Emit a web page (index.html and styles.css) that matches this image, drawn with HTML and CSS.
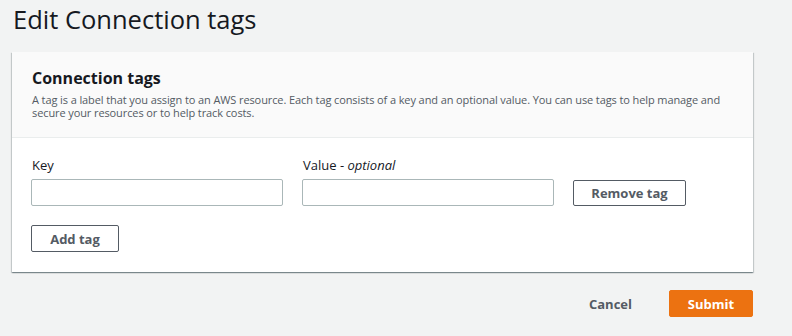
FILE: index.html
```html
<!DOCTYPE html>
<html lang="en">
  <head>
    <meta charset="UTF-8" />
    <meta name="viewport" content="width=device-width, initial-scale=1.0" />
    <title>Edit Connection tags</title>
    <link rel="stylesheet" href="styles.css">
  </head>
  <body>
    <div class="page">
      <h1 class="page-title">Edit Connection tags</h1>

      <div class="card">
        <div class="card-header">
          <h2 class="card-title">Connection tags</h2>
          <p class="card-desc">
            A tag is a label that you assign to an AWS resource. Each tag consists of a key and an optional value. You can use tags to help manage and secure your resources or to help track costs.
          </p>
        </div>

        <div class="card-body">
          <div class="tag-row">
            <div class="field">
              <label class="field-label">Key</label>
              <input class="field-input" type="text" />
            </div>
            <div class="field">
              <label class="field-label">Value - <i>optional</i></label>
              <input class="field-input" type="text" />
            </div>
            <button class="btn btn-remove">Remove tag</button>
          </div>
          <button class="btn btn-add">Add tag</button>
        </div>
      </div>

      <div class="actions">
        <button class="btn-link">Cancel</button>
        <button class="btn-primary">Submit</button>
      </div>
    </div>
  </body>
</html>
```

FILE: styles.css
```css
* {
  margin: 0;
  padding: 0;
  box-sizing: border-box;
}

body {
  font-family: "Open Sans", "Noto Sans", sans-serif;
  background-color: #f2f3f3;
  color: #16191f;
}

.page {
  padding: 4px 39px 0 12px;
}

.page-title {
  font-size: 25.5px;
  font-weight: 400;
  line-height: 30px;
  padding-left: 1px;
  margin-bottom: 18px;
}

/* 카드 */
.card {
  background-color: #fff;
  box-shadow: 0 1px 1px 0 rgba(0, 28, 36, 0.3),
    1px 1px 1px 0 rgba(0, 28, 36, 0.15),
    -1px 1px 1px 0 rgba(0, 28, 36, 0.15);
}

.card-header {
  background-color: #fafafa;
  border-bottom: 1px solid #eaeded;
  padding: 15px 20px 18px;
}

.card-title {
  font-size: 16px;
  font-weight: 700;
  line-height: 22px;
  margin-bottom: 4px;
}

.card-desc {
  font-size: 11px;
  line-height: 13px;
  letter-spacing: -0.1px;
  color: #545b64;
}

.card-body {
  padding: 17px 20px 20px 19px;
}

.tag-row {
  display: flex;
  align-items: flex-end;
  gap: 19px;
  margin-bottom: 19px;
}

.field {
  display: flex;
  flex-direction: column;
  gap: 4px;
  width: 252px;
}

.field-label {
  font-size: 13px;
  line-height: 20px;
  padding-left: 1px;
  color: #16191f;
}

.field-input {
  height: 27px;
  border: 1px solid #aab7b8;
  border-radius: 2px;
  background: #fff;
}

.btn {
  height: 27px;
  border: 1px solid #545b64;
  border-radius: 2px;
  background: #fff;
  color: #545b64;
  font-family: inherit;
  font-size: 13px;
  font-weight: 700;
  cursor: pointer;
}

.btn-remove {
  width: 113px;
  height: 26px;
}

.btn-add {
  width: 88px;
}

/* 하단 버튼 */
.actions {
  display: flex;
  justify-content: flex-end;
  align-items: center;
  gap: 18px;
  margin-top: 18px;
}

.btn-link {
  width: 81px;
  height: 27px;
  border: none;
  background: none;
  color: #545b64;
  font-family: inherit;
  font-size: 13px;
  font-weight: 700;
  cursor: pointer;
}

.btn-primary {
  width: 84px;
  height: 27px;
  border: 1px solid #ec7211;
  border-radius: 2px;
  background-color: #ec7211;
  color: #fff;
  font-family: inherit;
  font-size: 13px;
  font-weight: 700;
  cursor: pointer;
}
```
